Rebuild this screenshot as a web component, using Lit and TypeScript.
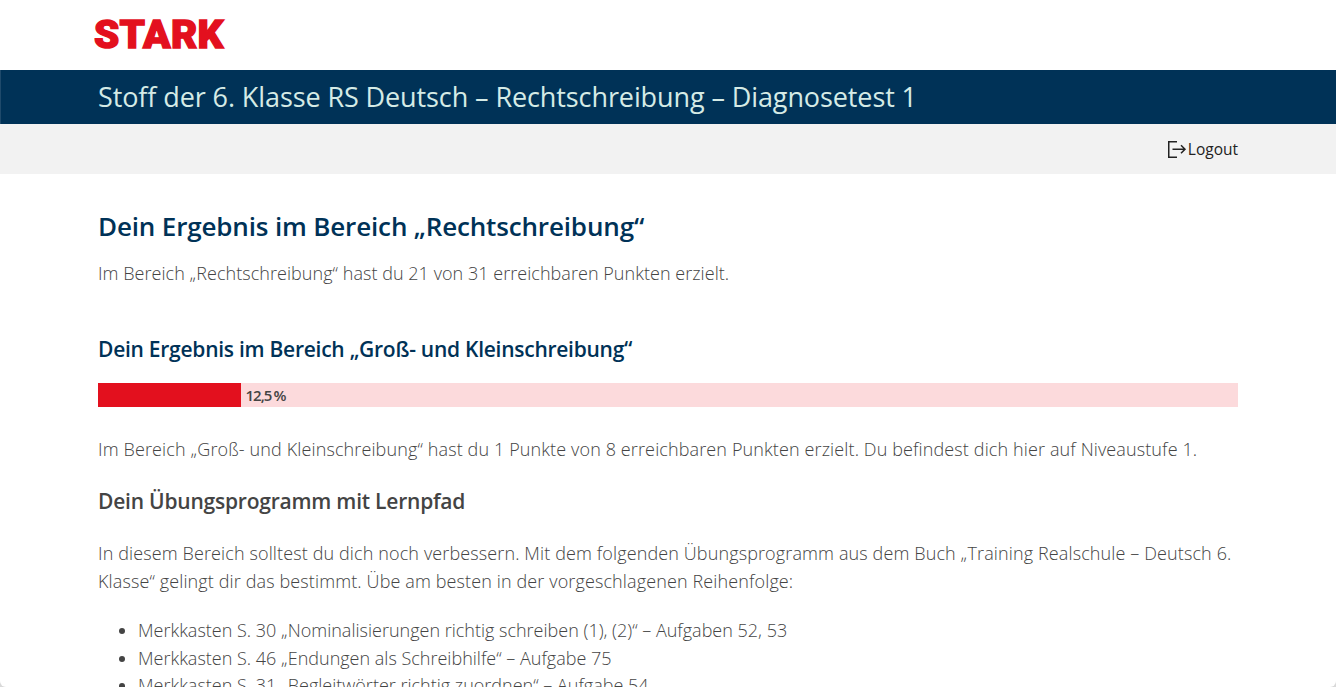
import { LitElement, html, css } from "lit";
import { customElement } from "lit/decorators.js";

@customElement("app-root")
export class AppRoot extends LitElement {
  static styles = css`
    :host {
      display: block;
      height: 687px;
      overflow: hidden;
      background: #d9d9d9;
      font-family: "Open Sans", "Noto Sans", sans-serif;
      color: #444;
    }
    .page {
      height: 687px;
      box-sizing: border-box;
      background: #fff;
      border-radius: 0 0 6px 6px;
      overflow: hidden;
    }
    .logo-row { height: 70px; display: flex; align-items: center; padding-left: 94px; }
    .logo {
      font: 900 38.5px/1 "Roboto", sans-serif;
      color: #e3101e;
      -webkit-text-stroke: 1.4px #e3101e;
      letter-spacing: 0.3px;
      transform: scaleX(1.05);
      transform-origin: left;
    }
    .title-bar {
      height: 54px;
      box-sizing: border-box;
      padding: 0 0 2px 98px;
      background: #003257;
      color: #d5ebe6;
      display: flex;
      align-items: center;
      font-size: 27px;
      letter-spacing: -0.1px;
      box-shadow: inset 1px 0 0 rgba(255, 255, 255, 0.12);
    }
    .tools {
      height: 50px;
      background: #f2f2f2;
      display: flex;
      justify-content: flex-end;
      align-items: center;
      gap: 1px;
      padding-right: 98px;
      font-size: 15.5px;
      color: #222;
    }
    .tools svg { width: 20px; height: 20px; }
    main { padding: 0 98px; }
    h1 { margin: 34px 0 0; font-size: 26px; line-height: 36px; font-weight: 600; color: #003257; letter-spacing: -0.15px; }
    h2 { margin: 0; font-size: 21px; line-height: 30px; font-weight: 600; color: #003257; letter-spacing: -0.26px; }
    h3 { margin: 24px 0 0; font-size: 21px; line-height: 28px; font-weight: 600; color: #444; letter-spacing: -0.22px; }
    p { margin: 0; font-size: 18px; line-height: 28px; font-weight: 300; letter-spacing: 0.12px; }
    .intro { margin-top: 15px; letter-spacing: 0.04px; }
    .sec { margin-top: 47px; }
    .bar { margin-top: 19px; height: 24px; background: #fcdadc; display: flex; align-items: center; }
    .fill { width: 12.5%; height: 100%; background: #e3101e; }
    .val { margin-left: 5px; font-size: 15px; font-weight: 600; letter-spacing: -1px; word-spacing: -0.6px; }
    .p2 { margin-top: 28px; }
    .p3 { margin-top: 24px; }
    ul { margin: 22px 0 0; padding-left: 40px; font-size: 18px; line-height: 27.5px; font-weight: 300; letter-spacing: 0; }
  `;

  render() {
    return html`<div class="page">
      <div class="logo-row"><span class="logo">STARK</span></div>
      <div class="title-bar">Stoff der 6. Klasse RS Deutsch – Rechtschreibung – Diagnosetest 1</div>
      <div class="tools">
        <svg viewBox="0 0 20 20" fill="none" stroke="#222" stroke-width="1.5">
          <path d="M10 2.75H1.75v15.5H10" />
          <path d="M5.5 10.25h12.5M14 6.25l4 4-4 4" />
        </svg>
        <span>Logout</span>
      </div>
      <main>
        <h1>Dein Ergebnis im Bereich „Rechtschreibung“</h1>
        <p class="intro">Im Bereich „Rechtschreibung“ hast du 21 von 31 erreichbaren Punkten erzielt.</p>
        <h2 class="sec">Dein Ergebnis im Bereich „Groß- und Kleinschreibung“</h2>
        <div class="bar"><div class="fill"></div><span class="val">12,5 %</span></div>
        <p class="p2">Im Bereich „Groß- und Kleinschreibung“ hast du 1 Punkte von 8 erreichbaren Punkten erzielt. Du befindest dich hier auf Niveaustufe 1.</p>
        <h3>Dein Übungsprogramm mit Lernpfad</h3>
        <p class="p3">In diesem Bereich solltest du dich noch verbessern. Mit dem folgenden Übungsprogramm aus dem Buch „Training Realschule – Deutsch 6. Klasse“ gelingt dir das bestimmt. Übe am besten in der vorgeschlagenen Reihenfolge:</p>
        <ul>
          <li>Merkkasten S. 30 „Nominalisierungen richtig schreiben (1), (2)“ – Aufgaben 52, 53</li>
          <li>Merkkasten S. 46 „Endungen als Schreibhilfe“ – Aufgabe 75</li>
          <li>Merkkasten S. 31 „Begleitwörter richtig zuordnen“ – Aufgabe 54</li>
        </ul>
      </main>
    </div>`;
  }
}
